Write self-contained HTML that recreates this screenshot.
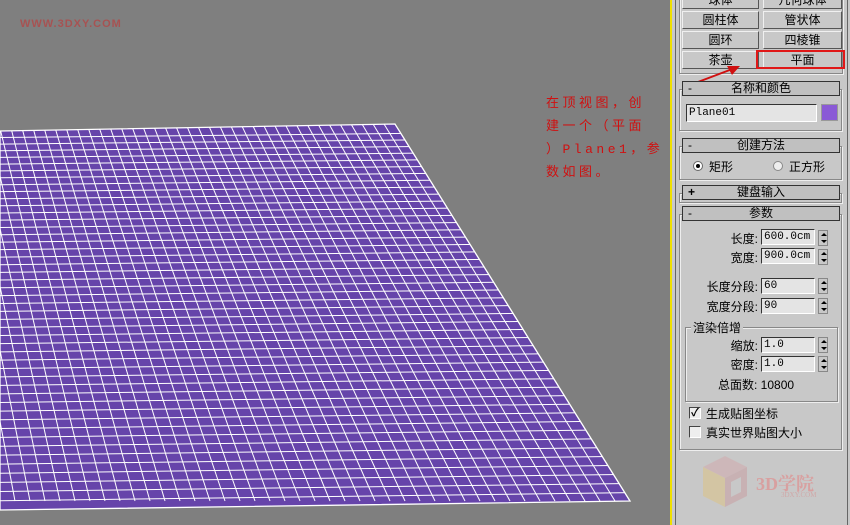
<!DOCTYPE html>
<html><head><meta charset="utf-8"><style>
*{margin:0;padding:0;box-sizing:border-box}
body{width:850px;height:525px;overflow:hidden;background:#7f7f7f;position:relative;font-family:"Liberation Sans","Noto Sans CJK SC",sans-serif;font-size:12px;color:#000}
.a{position:absolute}
.btn{position:absolute;height:18px;background:#c8c8c8;border:1px solid;border-color:#f0f0f0 #555 #555 #f0f0f0;text-align:center;line-height:16px;font-size:12px}
.hdr{position:absolute;left:682px;width:158px;height:15px;background:#c0c0c0;border:1px solid #333;text-align:center;line-height:13px;font-size:12px}
.hdr b{position:absolute;left:5px;top:0;font-weight:normal}
.grp{position:absolute;border:1px solid #888;box-shadow:1px 1px 0 #eee inset,1px 1px 0 #eee}
.fld{position:absolute;height:16px;background:#e4e4e4;border:1px solid;border-color:#333 #fff #fff #333;font-family:"Liberation Mono",monospace;font-size:11px;line-height:14px;padding-left:2px}
.sp{position:absolute;width:10px;height:16px;border:1px solid #888;background:#c8c8c8}
.sp:before{content:"";position:absolute;left:2px;top:2px;border:3px solid transparent;border-bottom:3px solid #000;border-top:0}
.sp:after{content:"";position:absolute;left:2px;bottom:2px;border:3px solid transparent;border-top:3px solid #000;border-bottom:0}
.lb{position:absolute;text-align:right;width:80px;font-size:12px}
</style></head><body>
<div class="a" style="left:20px;top:18px;color:#b24848;font-weight:bold;font-size:11px;letter-spacing:1px;opacity:.8">WWW.3DXY.COM</div>
<svg class="a" style="left:0;top:0" width="670" height="525" id="sv">
<defs><clipPath id="cp"><polygon points="0,131 395,124 630,501 0,510"/></clipPath></defs>
<polygon points="0,131 395,124 630,501 0,510" fill="#6644aa"/>
<g id="gl" clip-path="url(#cp)" stroke="#fff" stroke-width="1"></g>
<polygon points="0,131 395,124 630,501 0,510" fill="none" stroke="#fff" stroke-width="1.3"/>
</svg>
<script>
var g=document.getElementById('gl'),s='';
for(var k=0;k<50;k++){var xt=395-k*11,xb=630-k*15;s+='<line x1="'+xt+'" y1="124" x2="'+xb+'" y2="501"/>';}
var n=48;for(var i=1;i<n;i++){var t=i/n;t=t*0.82+t*t*0.18;var yl=131+t*(510-131),yr=124+t*(501-124);s+='<line x1="0" y1="'+yl+'" x2="700" y2="'+yr+'"/>';}
g.innerHTML=s;
</script>
<div class="a" style="left:546px;top:92px;color:#d01010;font-family:'Liberation Mono','Noto Sans CJK SC',monospace;font-size:13px;line-height:23px;letter-spacing:3.5px;width:125px">在顶视图，创<br>建一个（平面<br>）Plane1，参<br>数如图。</div>
<div class="a" style="left:670px;top:0;width:2px;height:525px;background:#f0e000"></div>
<div class="a" style="left:672px;top:0;width:178px;height:525px;background:#c8c8c8"></div>
<div class="a" style="left:675px;top:0;width:1px;height:525px;background:#666"></div>
<div class="a" style="left:847px;top:0;width:1px;height:525px;background:#666"></div>
<div class="grp" style="left:679px;top:-2px;width:164px;height:76px"></div>
<div class="btn" style="left:682px;top:-9px;width:77px">球体</div>
<div class="btn" style="left:763px;top:-9px;width:79px">几何球体</div>
<div class="btn" style="left:682px;top:11px;width:77px">圆柱体</div>
<div class="btn" style="left:763px;top:11px;width:79px">管状体</div>
<div class="btn" style="left:682px;top:31px;width:77px">圆环</div>
<div class="btn" style="left:763px;top:31px;width:79px">四棱锥</div>
<div class="btn" style="left:682px;top:51px;width:77px">茶壶</div>
<div class="btn" style="left:763px;top:51px;width:79px">平面</div>
<div class="a" style="left:756px;top:50px;width:89px;height:19px;border:2px solid #e01818"></div>
<svg class="a" style="left:685px;top:60px" width="60" height="30"><line x1="5" y1="25" x2="50" y2="8" stroke="#d01010" stroke-width="2"/><polygon points="55,6 42,6 47,15" fill="#d01010"/></svg>
<div class="grp" style="left:679px;top:89px;width:163px;height:42px"></div>
<div class="hdr" style="top:81px"><b>-</b>名称和颜色</div>
<div class="fld" style="left:686px;top:104px;width:131px;height:18px;line-height:16px">Plane01</div>
<div class="a" style="left:821px;top:104px;width:17px;height:17px;background:#8a5ad6;border:1px solid #999"></div>
<div class="grp" style="left:679px;top:146px;width:163px;height:34px"></div>
<div class="hdr" style="top:138px"><b>-</b>创建方法</div>
<div class="a" style="left:693px;top:161px;width:10px;height:10px;border-radius:50%;background:#fff;border:1px solid #666"><div style="margin:2px;width:4px;height:4px;border-radius:50%;background:#000"></div></div>
<div class="a" style="left:709px;top:158px">矩形</div>
<div class="a" style="left:773px;top:161px;width:10px;height:10px;border-radius:50%;background:#eee;border:1px solid #888"></div>
<div class="a" style="left:789px;top:158px">正方形</div>
<div class="grp" style="left:679px;top:193px;width:163px;height:10px"></div>
<div class="hdr" style="top:185px"><b style="font-weight:bold">+</b>键盘输入</div>
<div class="grp" style="left:679px;top:214px;width:163px;height:236px"></div>
<div class="hdr" style="top:206px"><b>-</b>参数</div>
<div class="lb" style="left:678px;top:230px">长度:</div><div class="fld" style="left:761px;top:229px;width:54px">600.0cm</div><div class="sp" style="left:818px;top:230px"></div>
<div class="lb" style="left:678px;top:249px">宽度:</div><div class="fld" style="left:761px;top:248px;width:54px">900.0cm</div><div class="sp" style="left:818px;top:249px"></div>
<div class="lb" style="left:678px;top:278px">长度分段:</div><div class="fld" style="left:761px;top:278px;width:54px">60</div><div class="sp" style="left:818px;top:278px"></div>
<div class="lb" style="left:678px;top:298px">宽度分段:</div><div class="fld" style="left:761px;top:298px;width:54px">90</div><div class="sp" style="left:818px;top:298px"></div>
<div class="grp" style="left:685px;top:327px;width:153px;height:75px"></div>
<div class="a" style="left:691px;top:319px;background:#c8c8c8;padding:0 2px">渲染倍增</div>
<div class="lb" style="left:678px;top:337px">缩放:</div><div class="fld" style="left:761px;top:337px;width:54px">1.0</div><div class="sp" style="left:818px;top:337px"></div>
<div class="lb" style="left:678px;top:356px">密度:</div><div class="fld" style="left:761px;top:356px;width:54px">1.0</div><div class="sp" style="left:818px;top:356px"></div>
<div class="a" style="left:718px;top:376px">总面数: 10800</div>
<div class="a" style="left:689px;top:407px;width:12px;height:12px;background:#eee;border:1px solid;border-color:#444 #fff #fff #444;font-size:11px;line-height:10px;text-align:center;font-weight:bold">✓</div>
<div class="a" style="left:706px;top:405px">生成贴图坐标</div>
<div class="a" style="left:689px;top:426px;width:12px;height:12px;background:#eee;border:1px solid;border-color:#444 #fff #fff #444"></div>
<div class="a" style="left:706px;top:424px">真实世界贴图大小</div>
<svg class="a" style="left:695px;top:452px" width="60" height="60" opacity="0.35">
<polygon points="8,15 30,4 52,15 30,26" fill="#d89aa0"/>
<polygon points="8,15 30,26 30,55 8,44" fill="#e8c060"/>
<polygon points="30,26 52,15 52,44 30,55" fill="#c8888e"/>
<polygon points="36,30 46,25 46,40 36,45" fill="#c8c8c8"/>
</svg>
<div class="a" style="left:756px;top:470px;color:#d8a0a0;font-family:'Liberation Serif','Noto Serif CJK SC',serif;font-weight:bold;font-size:18px">3D学院</div>
<div class="a" style="left:781px;top:491px;color:#d0a8a8;font-family:'Liberation Serif',serif;font-size:7px">3DXY.COM</div>
</body></html>
